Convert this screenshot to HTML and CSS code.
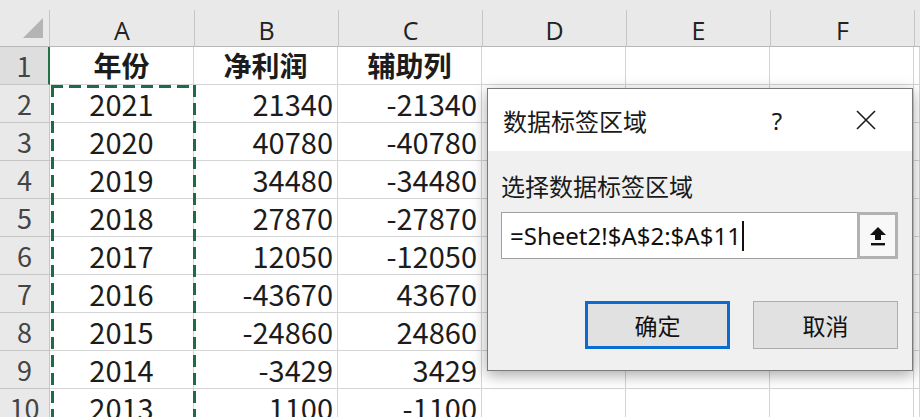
FILE: index.html
```html
<!DOCTYPE html>
<html lang="zh-CN">

<head>
    <meta charset="UTF-8">
    <meta name="viewport" content="width=device-width, initial-scale=1.0">
    <title>数据标签区域</title>

    <link rel="stylesheet" href="styles.css">
</head>

<body>
    <div class="sheet">
        <div class="head-row">
            <div class="corner"><span class="tri"></span></div>
            <div class="col-head wide-a">A</div>
            <div class="col-head">B</div>
            <div class="col-head">C</div>
            <div class="col-head">D</div>
            <div class="col-head">E</div>
            <div class="col-head">F</div>
            <div class="col-head rest"></div>
        </div>

        <div class="row">
            <div class="row-head active">1</div>
            <div class="cell wide-a title">年份</div>
            <div class="cell title">净利润</div>
            <div class="cell title">辅助列</div>
            <div class="cell"></div>
            <div class="cell"></div>
            <div class="cell"></div>
            <div class="cell rest"></div>
        </div>
        <div class="row">
            <div class="row-head">2</div>
            <div class="cell wide-a mid">2021</div>
            <div class="cell num">21340</div>
            <div class="cell num">-21340</div>
            <div class="cell"></div>
            <div class="cell"></div>
            <div class="cell"></div>
            <div class="cell rest"></div>
        </div>
        <div class="row">
            <div class="row-head">3</div>
            <div class="cell wide-a mid">2020</div>
            <div class="cell num">40780</div>
            <div class="cell num">-40780</div>
            <div class="cell"></div>
            <div class="cell"></div>
            <div class="cell"></div>
            <div class="cell rest"></div>
        </div>
        <div class="row">
            <div class="row-head">4</div>
            <div class="cell wide-a mid">2019</div>
            <div class="cell num">34480</div>
            <div class="cell num">-34480</div>
            <div class="cell"></div>
            <div class="cell"></div>
            <div class="cell"></div>
            <div class="cell rest"></div>
        </div>
        <div class="row">
            <div class="row-head">5</div>
            <div class="cell wide-a mid">2018</div>
            <div class="cell num">27870</div>
            <div class="cell num">-27870</div>
            <div class="cell"></div>
            <div class="cell"></div>
            <div class="cell"></div>
            <div class="cell rest"></div>
        </div>
        <div class="row">
            <div class="row-head">6</div>
            <div class="cell wide-a mid">2017</div>
            <div class="cell num">12050</div>
            <div class="cell num">-12050</div>
            <div class="cell"></div>
            <div class="cell"></div>
            <div class="cell"></div>
            <div class="cell rest"></div>
        </div>
        <div class="row">
            <div class="row-head">7</div>
            <div class="cell wide-a mid">2016</div>
            <div class="cell num">-43670</div>
            <div class="cell num">43670</div>
            <div class="cell"></div>
            <div class="cell"></div>
            <div class="cell"></div>
            <div class="cell rest"></div>
        </div>
        <div class="row">
            <div class="row-head">8</div>
            <div class="cell wide-a mid">2015</div>
            <div class="cell num">-24860</div>
            <div class="cell num">24860</div>
            <div class="cell"></div>
            <div class="cell"></div>
            <div class="cell"></div>
            <div class="cell rest"></div>
        </div>
        <div class="row">
            <div class="row-head">9</div>
            <div class="cell wide-a mid">2014</div>
            <div class="cell num">-3429</div>
            <div class="cell num">3429</div>
            <div class="cell"></div>
            <div class="cell"></div>
            <div class="cell"></div>
            <div class="cell rest"></div>
        </div>
        <div class="row">
            <div class="row-head">10</div>
            <div class="cell wide-a mid">2013</div>
            <div class="cell num">1100</div>
            <div class="cell num">-1100</div>
            <div class="cell"></div>
            <div class="cell"></div>
            <div class="cell"></div>
            <div class="cell rest"></div>
        </div>

        <!-- copy marquee round A2:A11 -->
        <div class="marquee"></div>

        <div class="dialog">
            <div class="dlg-title">
                <span class="dlg-name">数据标签区域</span>
                <span class="dlg-help">?</span>
                <span class="dlg-close">
                    <svg width="22" height="22" viewBox="0 0 22 22">
                        <path d="M2 2 L20 20 M20 2 L2 20" stroke="#1a1a1a" stroke-width="1.6" fill="none" />
                    </svg>
                </span>
            </div>
            <div class="dlg-body">
                <p class="dlg-label">选择数据标签区域</p>
                <div class="ref-box">
                    <div class="ref-input">=Sheet2!$A$2:$A$11<span class="caret"></span></div>
                    <div class="ref-btn">
                        <svg width="20" height="22" viewBox="0 0 20 22">
                            <path d="M10 2 L2 10 L7 10 L7 15 L13 15 L13 10 L18 10 Z" fill="#111" />
                            <rect x="3" y="18" width="14" height="2.4" fill="#111" />
                        </svg>
                    </div>
                </div>
                <div class="dlg-buttons">
                    <button type="button" class="btn btn-default">确定</button>
                    <button type="button" class="btn">取消</button>
                </div>
            </div>
        </div>
    </div>
</body>

</html>
```

FILE: styles.css
```css
body {
    margin: 0;
    background-color: #ffffff;
    font-family: "Noto Sans CJK SC", "Noto Sans", sans-serif;
    color: #1c1c1c;
    overflow: hidden;
}

.sheet {
    position: relative;
    width: 920px;
    height: 417px;
    overflow: hidden;
}

.head-row {
    display: flex;
    height: 36px;
    padding-top: 10px;
    background-color: #e9e9e9;
    border-bottom: 1px solid #b8b8b8;
}

.corner {
    width: 49px;
    flex: none;
    border-right: 1px solid #c6c6c6;
    position: relative;
}

.tri {
    position: absolute;
    right: 6px;
    bottom: 8px;
    width: 0;
    height: 0;
    border-left: 20px solid transparent;
    border-bottom: 20px solid #b4b4b4;
}

.col-head {
    width: 143px;
    flex: none;
    border-right: 1px solid #c6c6c6;
    text-align: center;
    font-family: "Open Sans", "Noto Sans", sans-serif;
    font-size: 25px;
    line-height: 40px;
    color: #222;
}

.wide-a {
    width: 144px;
}

.rest {
    flex: 1;
    border-right: none;
}

.row {
    display: flex;
    height: 38px;
}

.row-head {
    width: 49px;
    flex: none;
    background-color: #e9e9e9;
    border-right: 1px solid #c6c6c6;
    border-bottom: 1px solid #c6c6c6;
    text-align: center;
    font-size: 27px;
    line-height: 37px;
    color: #444;
}

.row-head.active {
    background-color: #dedede;
    border-right: 2px solid #217346;
    width: 48px;
}

.cell {
    width: 143px;
    flex: none;
    border-right: 1px solid #d4d4d4;
    border-bottom: 1px solid #d4d4d4;
    font-size: 29px;
    line-height: 37px;
    white-space: nowrap;
}

.cell.rest {
    flex: 1;
}

.title {
    text-align: center;
    font-weight: bold;
    font-size: 28px;
}

.mid {
    text-align: center;
}

.num {
    text-align: right;
    padding-right: 4px;
    width: 139px;
}

.marquee {
    position: absolute;
    left: 51px;
    top: 85px;
    width: 145px;
    height: 340px;
    background-image:
        repeating-linear-gradient(90deg, #1e6b47 0 12px, transparent 12px 18px),
        repeating-linear-gradient(180deg, #1e6b47 0 12px, transparent 12px 18px),
        repeating-linear-gradient(180deg, #1e6b47 0 12px, transparent 12px 18px);
    background-size: 100% 3px, 3px 100%, 3px 100%;
    background-position: 0 0, 0 0, 100% 0;
    background-repeat: no-repeat;
}

.dialog {
    position: absolute;
    left: 487px;
    top: 88px;
    width: 424px;
    height: 281px;
    border: 1px solid #7a7a7a;
    background-color: #f0f0f0;
    box-shadow: 0 4px 14px rgba(0, 0, 0, 0.35);
    display: flex;
    flex-direction: column;
}

.dlg-title {
    height: 62px;
    flex: none;
    background-color: #ffffff;
    display: flex;
    align-items: center;
    padding-left: 15px;
    font-size: 24px;
    color: #1a1a1a;
}

.dlg-name {
    flex: 1;
}

.dlg-help {
    width: 40px;
    text-align: center;
    font-family: "Noto Sans", sans-serif;
    font-size: 24px;
    margin-right: 48px;
}

.dlg-close {
    width: 42px;
    display: flex;
    justify-content: center;
    margin-right: 25px;
}

.dlg-body {
    flex: 1;
    padding: 0 14px 0 13px;
}

.dlg-label {
    margin: 19px 0 0 0;
    font-size: 24px;
    line-height: 32px;
    color: #1a1a1a;
}

.ref-box {
    display: flex;
    margin-top: 10px;
    height: 47px;
}

.ref-input {
    flex: 1;
    background-color: #ffffff;
    border: 1px solid #a0a0a0;
    border-right: none;
    font-family: "Noto Sans", sans-serif;
    font-size: 24px;
    line-height: 45px;
    padding-left: 8px;
    color: #111;
    display: flex;
    align-items: center;
}

.caret {
    display: inline-block;
    width: 2px;
    height: 30px;
    background-color: #111;
    margin-left: 1px;
}

.ref-btn {
    width: 35px;
    flex: none;
    border: 3px solid #b2b2b2;
    background-color: #f8f8f8;
    display: flex;
    align-items: center;
    justify-content: center;
}

.dlg-buttons {
    display: flex;
    justify-content: flex-end;
    gap: 23px;
    margin-top: 42px;
}

.btn {
    width: 145px;
    height: 48px;
    background-color: #e1e1e1;
    border: 1px solid #adadad;
    font-family: "Noto Sans CJK SC", sans-serif;
    font-size: 23px;
    color: #111;
    padding: 0;
    cursor: pointer;
}

.btn-default {
    border: 3px solid #0a6cce;
}
```
